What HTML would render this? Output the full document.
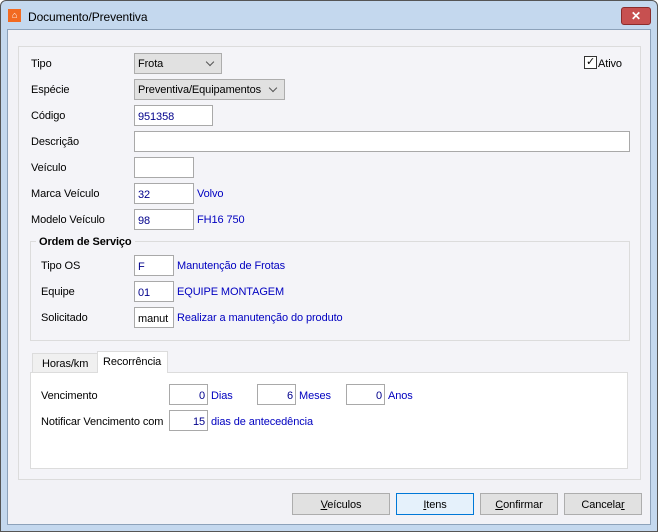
<!DOCTYPE html><html><head><style>
*{box-sizing:border-box;margin:0;padding:0}
body{width:658px;height:532px;background:#fff;font-family:"Liberation Sans",sans-serif;font-size:11px;letter-spacing:-0.1px;color:#000;position:relative;overflow:hidden}
.a{position:absolute}
.win{left:0;top:0;width:658px;height:532px;background:#c4d8ee;border:1px solid #555;border-radius:6px 6px 0 0}
.client{left:7px;top:29px;width:644px;height:496px;background:#f2f2f6;border:1px solid #8da2ba}
.panel{left:18px;top:46px;width:623px;height:434px;background:#f4f4f8;border:1px solid #dcdcdc}
.l{position:absolute;white-space:nowrap}
.in{position:absolute;background:#fff;border:1px solid #a9a9a9;color:#00008b;padding:5px 0 0 3px;height:21px}
.r{text-align:right;padding:5px 2px 0 0}
.cb{position:absolute;background:#e1e1e1;border:1px solid #adadad;padding:4px 0 0 3px;height:21px}
.cb:after{content:"";position:absolute;right:8px;top:5px;width:5px;height:5px;border-right:1px solid #555;border-bottom:1px solid #555;transform:rotate(45deg)}
.b{color:#0000c0}
.btn{position:absolute;top:493px;height:22px;background:#e1e1e1;border:1px solid #adadad;text-align:center;padding-top:5px}
</style></head><body>
<div class="a win"></div>
<div class="a" style="left:8px;top:9px;width:13px;height:13px;background:#f26a21;color:#fff;font-size:9px;text-align:center;line-height:13px">⌂</div>
<div class="l" style="left:28px;top:10px;font-size:12px">Documento/Preventiva</div>
<div class="a" style="left:621px;top:7px;width:30px;height:18px;background:#c75050;border:1px solid #8b2c2c;border-radius:3px;color:#fff;font-weight:bold;text-align:center;font-size:12px;line-height:16px">✕</div>
<div class="a client"></div>
<div class="a panel"></div>
<div class="l" style="left:31px;top:58px">Tipo</div>
<div class="cb" style="left:134px;top:53px;width:88px">Frota</div>
<div class="a" style="left:584px;top:56px;width:13px;height:13px;border:1px solid #333;background:#fff;font-size:11px;line-height:11px;text-align:center">✓</div>
<div class="l" style="left:598px;top:58px">Ativo</div>
<div class="l" style="left:31px;top:84px">Espécie</div>
<div class="cb" style="left:134px;top:79px;width:151px">Preventiva/Equipamentos</div>
<div class="l" style="left:31px;top:110px">Código</div>
<div class="in" style="left:134px;top:105px;width:79px">951358</div>
<div class="l" style="left:31px;top:136px">Descrição</div>
<div class="in" style="left:134px;top:131px;width:496px"></div>
<div class="l" style="left:31px;top:162px">Veículo</div>
<div class="in" style="left:134px;top:157px;width:60px"></div>
<div class="l" style="left:31px;top:188px">Marca Veículo</div>
<div class="in" style="left:134px;top:183px;width:60px">32</div>
<div class="l b" style="left:197px;top:188px">Volvo</div>
<div class="l" style="left:31px;top:214px">Modelo Veículo</div>
<div class="in" style="left:134px;top:209px;width:60px">98</div>
<div class="l b" style="left:197px;top:214px">FH16 750</div>
<div class="a" style="left:30px;top:241px;width:600px;height:100px;border:1px solid #dcdcdc"></div>
<div class="l" style="left:36px;top:236px;background:#f4f4f8;padding:0 3px;font-weight:bold">Ordem de Serviço</div>
<div class="l" style="left:41px;top:260px">Tipo OS</div>
<div class="in" style="left:134px;top:255px;width:40px">F</div>
<div class="l b" style="left:177px;top:260px">Manutenção de Frotas</div>
<div class="l" style="left:41px;top:286px">Equipe</div>
<div class="in" style="left:134px;top:281px;width:40px">01</div>
<div class="l b" style="left:177px;top:286px">EQUIPE MONTAGEM</div>
<div class="l" style="left:41px;top:312px">Solicitado</div>
<div class="in" style="left:134px;top:307px;width:40px;color:#000">manut</div>
<div class="l b" style="left:177px;top:312px">Realizar a manutenção do produto</div>
<div class="a" style="left:32px;top:353px;width:66px;height:20px;background:#f0f0f0;border:1px solid #dcdcdc"></div>
<div class="l" style="left:42px;top:358px">Horas/km</div>
<div class="a" style="left:30px;top:372px;width:598px;height:97px;background:#fff;border:1px solid #dcdcdc"></div>
<div class="a" style="left:97px;top:351px;width:71px;height:22px;background:#fff;border:1px solid #dcdcdc;border-bottom:none"></div>
<div class="l" style="left:103px;top:356px">Recorrência</div>
<div class="l" style="left:41px;top:390px">Vencimento</div>
<div class="in r" style="left:169px;top:384px;width:39px">0</div>
<div class="l b" style="left:211px;top:390px">Dias</div>
<div class="in r" style="left:257px;top:384px;width:39px">6</div>
<div class="l b" style="left:299px;top:390px">Meses</div>
<div class="in r" style="left:346px;top:384px;width:39px">0</div>
<div class="l b" style="left:388px;top:390px">Anos</div>
<div class="l" style="left:41px;top:416px">Notificar Vencimento com</div>
<div class="in r" style="left:169px;top:410px;width:39px">15</div>
<div class="l b" style="left:211px;top:416px">dias de antecedência</div>
<div class="btn" style="left:292px;width:98px"><u>V</u>eículos</div>
<div class="btn" style="left:396px;width:78px;background:#e5f1fb;border-color:#0078d7"><u>I</u>tens</div>
<div class="btn" style="left:480px;width:78px"><u>C</u>onfirmar</div>
<div class="btn" style="left:564px;width:78px">Cancela<u>r</u></div>
</body></html>
